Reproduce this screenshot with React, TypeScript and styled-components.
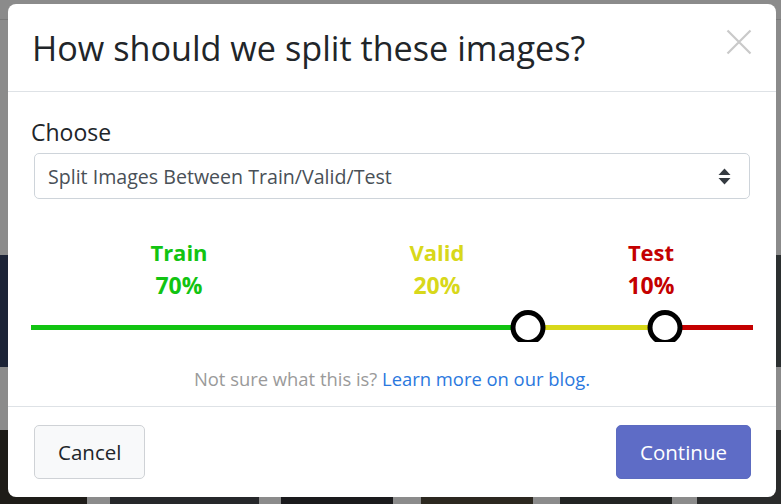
import React from "react";
import styled, { createGlobalStyle } from "styled-components";

const GlobalStyle = createGlobalStyle`
  html, body { margin: 0; padding: 0; }
  body {
    width: 781px;
    height: 504px;
    overflow: hidden;
    font-family: "Open Sans", "Noto Sans", "Liberation Sans", sans-serif;
    background: #8b8b8b;
  }
`;

/* ---------- page behind the dialog (already dimmed) ---------- */
const Page = styled.div`
  position: fixed;
  inset: 0;
  display: flex;
  flex-direction: column;
  background: #8b8b8b;
`;

const TopBar = styled.div`
  height: 19px;
  border-bottom: 1px solid #7a7a7a;
  flex: none;
`;

const PageSpacer = styled.div<{ $h: number }>`
  height: ${(p) => p.$h}px;
  flex: none;
`;

const ThumbRow = styled.div<{ $h: number }>`
  display: flex;
  height: ${(p) => p.$h}px;
  flex: none;
`;

const Thumb = styled.div<{ $w: number; $bg: string }>`
  width: ${(p) => p.$w}px;
  background: ${(p) => p.$bg};
  flex: none;
`;

const Gap = styled.div<{ $w: number }>`
  width: ${(p) => p.$w}px;
  flex: none;
`;

/* ---------- modal ---------- */
const Overlay = styled.div`
  position: fixed;
  inset: 0;
  display: flex;
  align-items: flex-start;
  justify-content: center;
  padding-top: 4px;
`;

const Dialog = styled.div`
  width: 768px;
  height: 493px;
  background: #fff;
  border-radius: 8px;
  display: flex;
  flex-direction: column;
  overflow: hidden;
  margin-left: 3px;
`;

const Header = styled.div`
  height: 87px;
  flex: none;
  display: flex;
  align-items: flex-start;
  justify-content: space-between;
  padding: 0 24px;
  border-bottom: 1px solid #dee2e6;
`;

const Title = styled.h1`
  margin: 20px 0 0 0;
  font-size: 34.2px;
  line-height: 47px;
  font-weight: 500;
  color: #212529;
`;

const CloseButton = styled.button`
  width: 26px;
  height: 26px;
  margin-top: 25px;
  padding: 0;
  border: none;
  background: none;
  display: flex;
  align-items: center;
  justify-content: center;
`;

const Body = styled.div`
  flex: 1;
  padding: 25px 23px 0 23px;
  display: flex;
  flex-direction: column;
`;

const Label = styled.div`
  font-size: 23px;
  color: #212529;
  line-height: 30px;
  margin-bottom: 6px;
`;

const Select = styled.div`
  height: 46px;
  margin: 0 3px;
  border: 1px solid #ced4da;
  border-radius: 5px;
  box-sizing: border-box;
  display: flex;
  align-items: center;
  justify-content: space-between;
  padding: 0 18px 0 13px;
  font-size: 19.6px;
  color: #495057;
`;

const SplitArea = styled.div`
  margin-top: 37px;
  display: flex;
  flex-direction: column;
`;

const LabelGrid = styled.div`
  display: grid;
  grid-template-columns: 296px 220px 208px;
`;

const SplitLabel = styled.div<{ $color: string }>`
  display: flex;
  flex-direction: column;
  align-items: center;
  color: ${(p) => p.$color};
  font-weight: 700;
  font-size: 22px;
  line-height: 33px;
`;

const Percent = styled.span`
  font-size: 23px;
`;

const TrackBox = styled.div`
  position: relative;
  height: 32px;
  margin-top: 8px;
  overflow: hidden;
`;

const Track = styled.div`
  position: absolute;
  left: 0;
  right: 0;
  top: 15px;
  height: 5px;
  display: flex;
`;

const Segment = styled.div<{ $color: string }>`
  background: ${(p) => p.$color};
  height: 100%;
`;

const Handle = styled.div`
  position: absolute;
  top: 0;
  width: 35px;
  height: 35px;
  box-sizing: border-box;
  border: 5px solid #000;
  border-radius: 50%;
  background: #fff;
  transform: translateX(-50%);
`;

const Note = styled.div`
  margin-top: 25px;
  text-align: center;
  font-size: 18.4px;
  line-height: 24.5px;
  color: #9a9a9a;
`;

const Link = styled.a`
  color: #2a78de;
  text-decoration: none;
`;

const Footer = styled.div`
  flex: none;
  height: 91px;
  box-sizing: border-box;
  border-top: 1px solid #dee2e6;
  display: flex;
  align-items: flex-start;
  justify-content: space-between;
  padding: 18px 25px 0 26px;
`;

const Button = styled.button<{ $primary?: boolean }>`
  height: 54px;
  box-sizing: border-box;
  border-radius: 5px;
  font-family: inherit;
  font-size: 20.5px;
  padding: 0 23px;
  border: 1px solid ${(p) => (p.$primary ? "#5c6bc0" : "#cfd2d6")};
  background: ${(p) => (p.$primary ? "#5e6cc6" : "#f8f9fa")};
  color: ${(p) => (p.$primary ? "#fff" : "#212529")};
`;

const splits = [
  { name: "Train", pct: 70, color: "#12c412" },
  { name: "Valid", pct: 20, color: "#d8d81a" },
  { name: "Test", pct: 10, color: "#c40000" },
];

export default function App() {
  const handles = [68.9, 87.8];
  return (
    <>
      <GlobalStyle />
      <Page>
        <TopBar />
        <PageSpacer $h={235} />
        <ThumbRow $h={112}>
          <Thumb $w={40} $bg="#1d2437" />
          <Gap $w={700} />
          <Thumb $w={41} $bg="#2b2f30" />
        </ThumbRow>
        <PageSpacer $h={63} />
        <ThumbRow $h={75}>
          <Thumb $w={87} $bg="#1e1c18" />
          <Gap $w={23} />
          <Thumb $w={149} $bg="#26272a" />
          <Gap $w={22} />
          <Thumb $w={112} $bg="#1a1a1c" />
          <Gap $w={28} />
          <Thumb $w={112} $bg="#2c2820" />
          <Gap $w={27} />
          <Thumb $w={112} $bg="#222423" />
          <Gap $w={25} />
          <Thumb $w={84} $bg="#2a2b2b" />
        </ThumbRow>
      </Page>
      <Overlay>
        <Dialog>
          <Header>
            <Title>How should we split these images?</Title>
            <CloseButton aria-label="Close">
              <svg width="26" height="26" viewBox="0 0 26 26">
                <path d="M1.5 1.5 L24.5 24.5 M24.5 1.5 L1.5 24.5" stroke="#c9c9c9" strokeWidth="2.2" fill="none" />
              </svg>
            </CloseButton>
          </Header>
          <Body>
            <Label>Choose</Label>
            <Select>
              <span>Split Images Between Train/Valid/Test</span>
              <svg width="13" height="17" viewBox="0 0 13 17">
                <path d="M6.5 0.5 L12.5 7 L0.5 7 Z" fill="#343a40" />
                <path d="M0.5 10 L12.5 10 L6.5 16.5 Z" fill="#343a40" />
              </svg>
            </Select>
            <SplitArea>
              <LabelGrid>
                {splits.map((s) => (
                  <SplitLabel key={s.name} $color={s.color}>
                    <span>{s.name}</span>
                    <Percent>{s.pct}%</Percent>
                  </SplitLabel>
                ))}
              </LabelGrid>
              <TrackBox>
                <Track>
                  <Segment $color={splits[0].color} style={{ width: `${handles[0]}%` }} />
                  <Segment $color={splits[1].color} style={{ width: `${handles[1] - handles[0]}%` }} />
                  <Segment $color={splits[2].color} style={{ flex: 1 }} />
                </Track>
                {handles.map((h) => (
                  <Handle key={h} style={{ left: `${h}%` }} />
                ))}
              </TrackBox>
            </SplitArea>
            <Note>
              Not sure what this is? <Link href="#">Learn more on our blog.</Link>
            </Note>
          </Body>
          <Footer>
            <Button>Cancel</Button>
            <Button $primary>Continue</Button>
          </Footer>
        </Dialog>
      </Overlay>
    </>
  );
}
